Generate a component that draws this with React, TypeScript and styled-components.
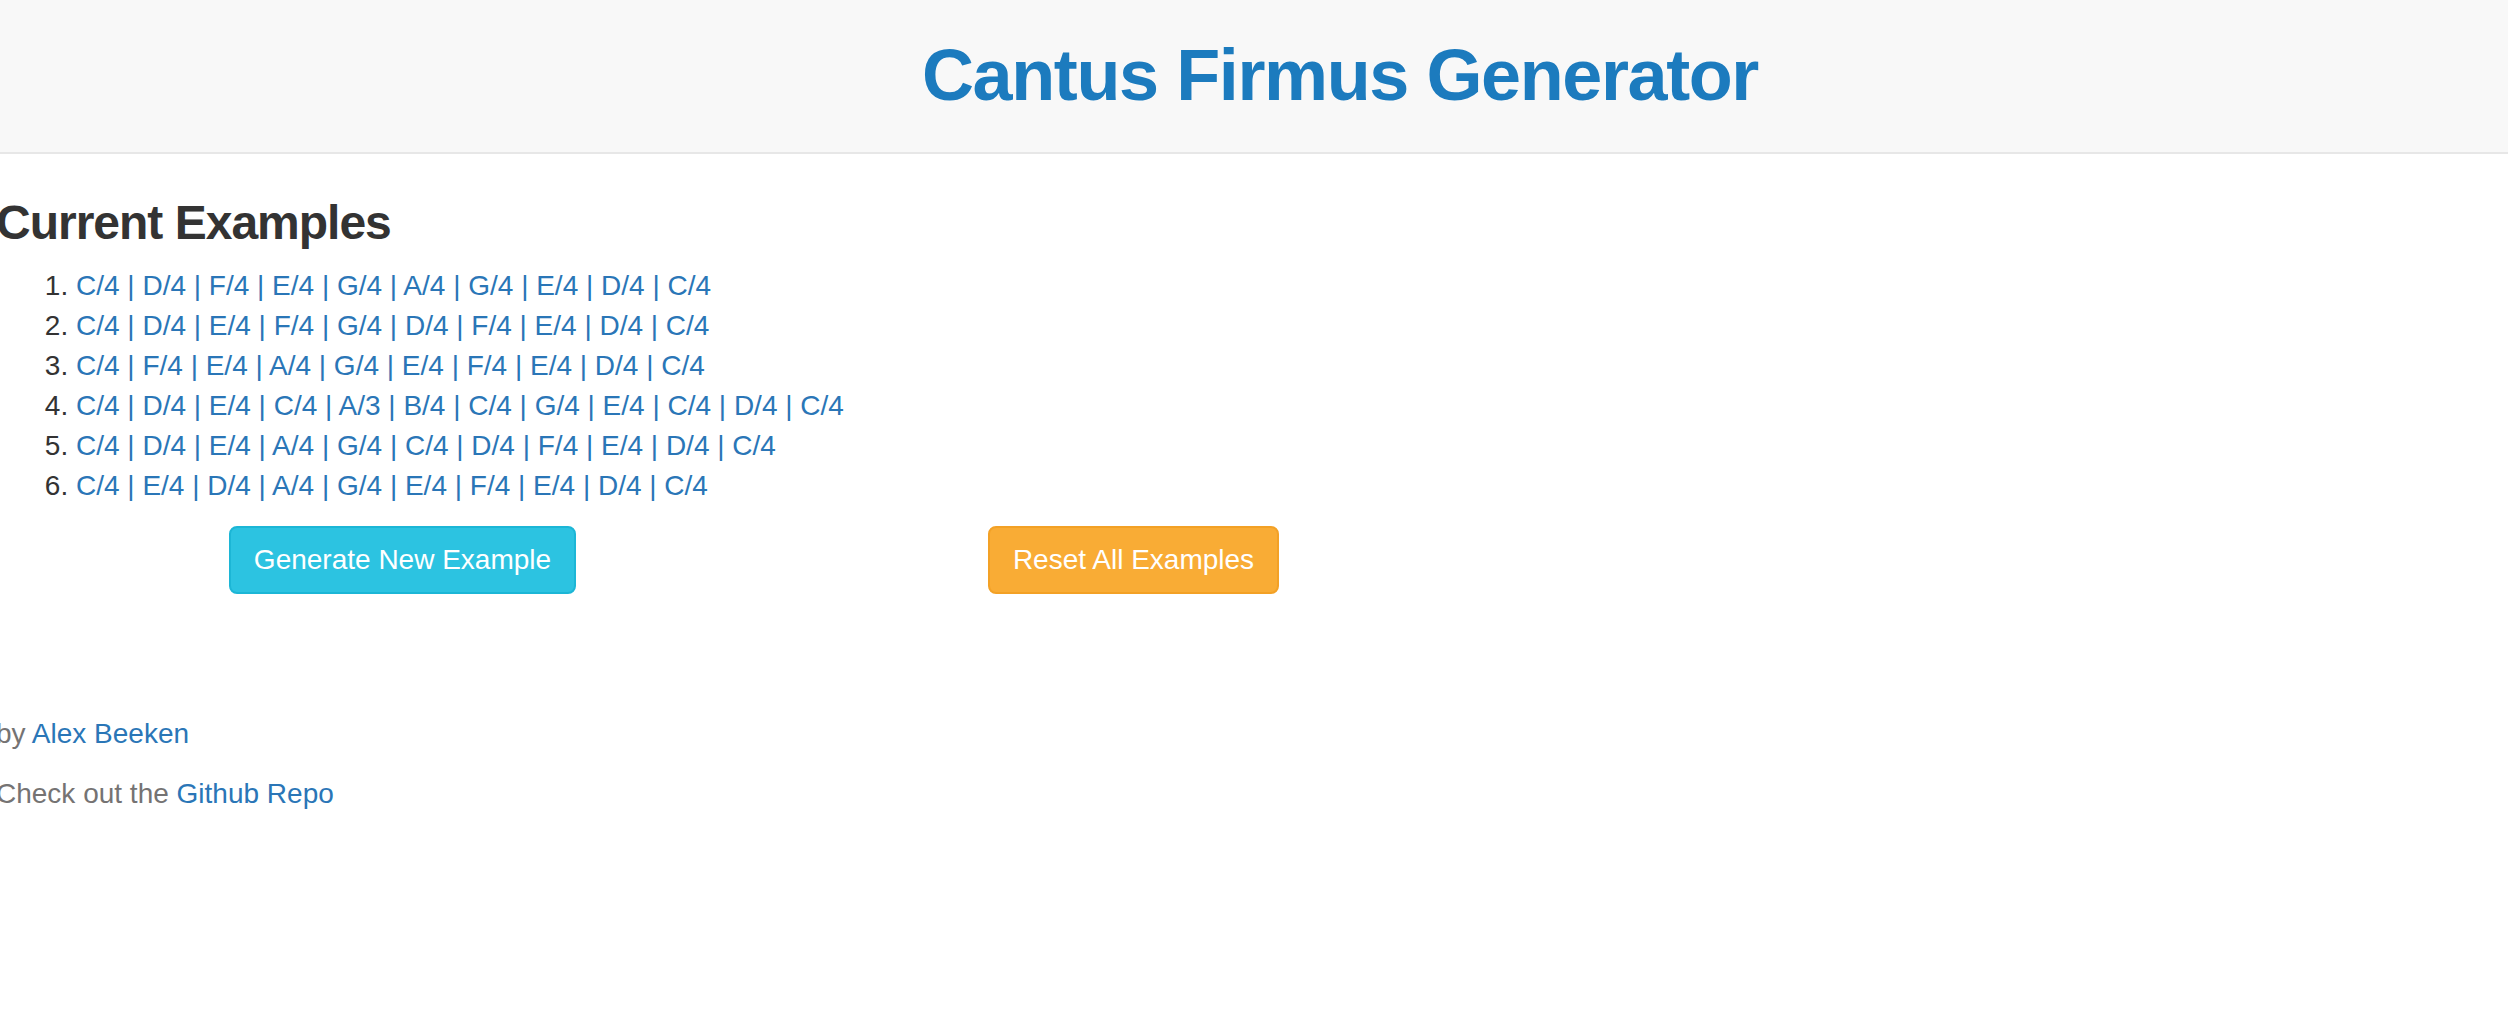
import React from "react";
import styled, { createGlobalStyle } from "styled-components";

const GlobalStyle = createGlobalStyle`
  html, body {
    margin: 0;
    padding: 0;
    background: #ffffff;
    font-family: "Liberation Sans", Arial, Helvetica, sans-serif;
    color: #333333;
    font-size: 28px;
    line-height: 40px;
  }
  * { box-sizing: border-box; }
`;

const Header = styled.header`
  height: 154px;
  background: #f8f8f8;
  border-bottom: 2px solid #e7e7e7;
  display: flex;
  align-items: center;
  justify-content: center;
  padding-left: 172px;
`;

const Title = styled.h1`
  margin: 0;
  font-size: 72px;
  line-height: 1.1;
  font-weight: 700;
  letter-spacing: -1.4px;
  color: #1c7bbe;
  text-align: center;
`;

const Main = styled.main`
  margin-left: -4px;
  padding-top: 43px;
`;

const SectionTitle = styled.h3`
  margin: 0 0 16px;
  font-size: 48px;
  line-height: 1.1;
  font-weight: 700;
  letter-spacing: -1px;
  color: #333333;
`;

const List = styled.ol`
  margin: 0;
  padding-left: 80px;
`;

const Item = styled.li`
  line-height: 40px;
  color: #333333;
`;

const Link = styled.a`
  color: #2a76b7;
  text-decoration: none;
`;

const ButtonRow = styled.div`
  display: grid;
  grid-template-columns: 731px 731px;
  justify-items: center;
  padding-left: 41px;
  margin-top: 20px;
`;

const Button = styled.button<{ $variant: "info" | "warning" }>`
  font-family: "Liberation Sans", Arial, Helvetica, sans-serif;
  font-size: 28px;
  line-height: 40px;
  padding: 12px 23px;
  border-radius: 8px;
  color: #ffffff;
  cursor: pointer;
  border: 2px solid ${(p) => (p.$variant === "info" ? "#1cb6d6" : "#f3a126")};
  background: ${(p) => (p.$variant === "info" ? "#2cc3e1" : "#f9ac35")};
`;

const Footer = styled.footer`
  margin-top: 120px;
`;

const Para = styled.p`
  margin: 0 0 20px;
  color: #757373;
  line-height: 40px;
`;

const examples: string[][] = [
  ["C/4", "D/4", "F/4", "E/4", "G/4", "A/4", "G/4", "E/4", "D/4", "C/4"],
  ["C/4", "D/4", "E/4", "F/4", "G/4", "D/4", "F/4", "E/4", "D/4", "C/4"],
  ["C/4", "F/4", "E/4", "A/4", "G/4", "E/4", "F/4", "E/4", "D/4", "C/4"],
  ["C/4", "D/4", "E/4", "C/4", "A/3", "B/4", "C/4", "G/4", "E/4", "C/4", "D/4", "C/4"],
  ["C/4", "D/4", "E/4", "A/4", "G/4", "C/4", "D/4", "F/4", "E/4", "D/4", "C/4"],
  ["C/4", "E/4", "D/4", "A/4", "G/4", "E/4", "F/4", "E/4", "D/4", "C/4"],
];

export default function App() {
  return (
    <>
      <GlobalStyle />
      <Header>
        <Title>Cantus Firmus Generator</Title>
      </Header>
      <Main>
        <SectionTitle>Current Examples</SectionTitle>
        <List>
          {examples.map((ex, i) => (
            <Item key={i}>
              <Link href="#">{ex.join(" | ")}</Link>
            </Item>
          ))}
        </List>
        <ButtonRow>
          <Button $variant="info">Generate New Example</Button>
          <Button $variant="warning">Reset All Examples</Button>
        </ButtonRow>
        <Footer>
          <Para>
            by <Link href="#">Alex Beeken</Link>
          </Para>
          <Para>
            Check out the <Link href="#">Github Repo</Link>
          </Para>
        </Footer>
      </Main>
    </>
  );
}
